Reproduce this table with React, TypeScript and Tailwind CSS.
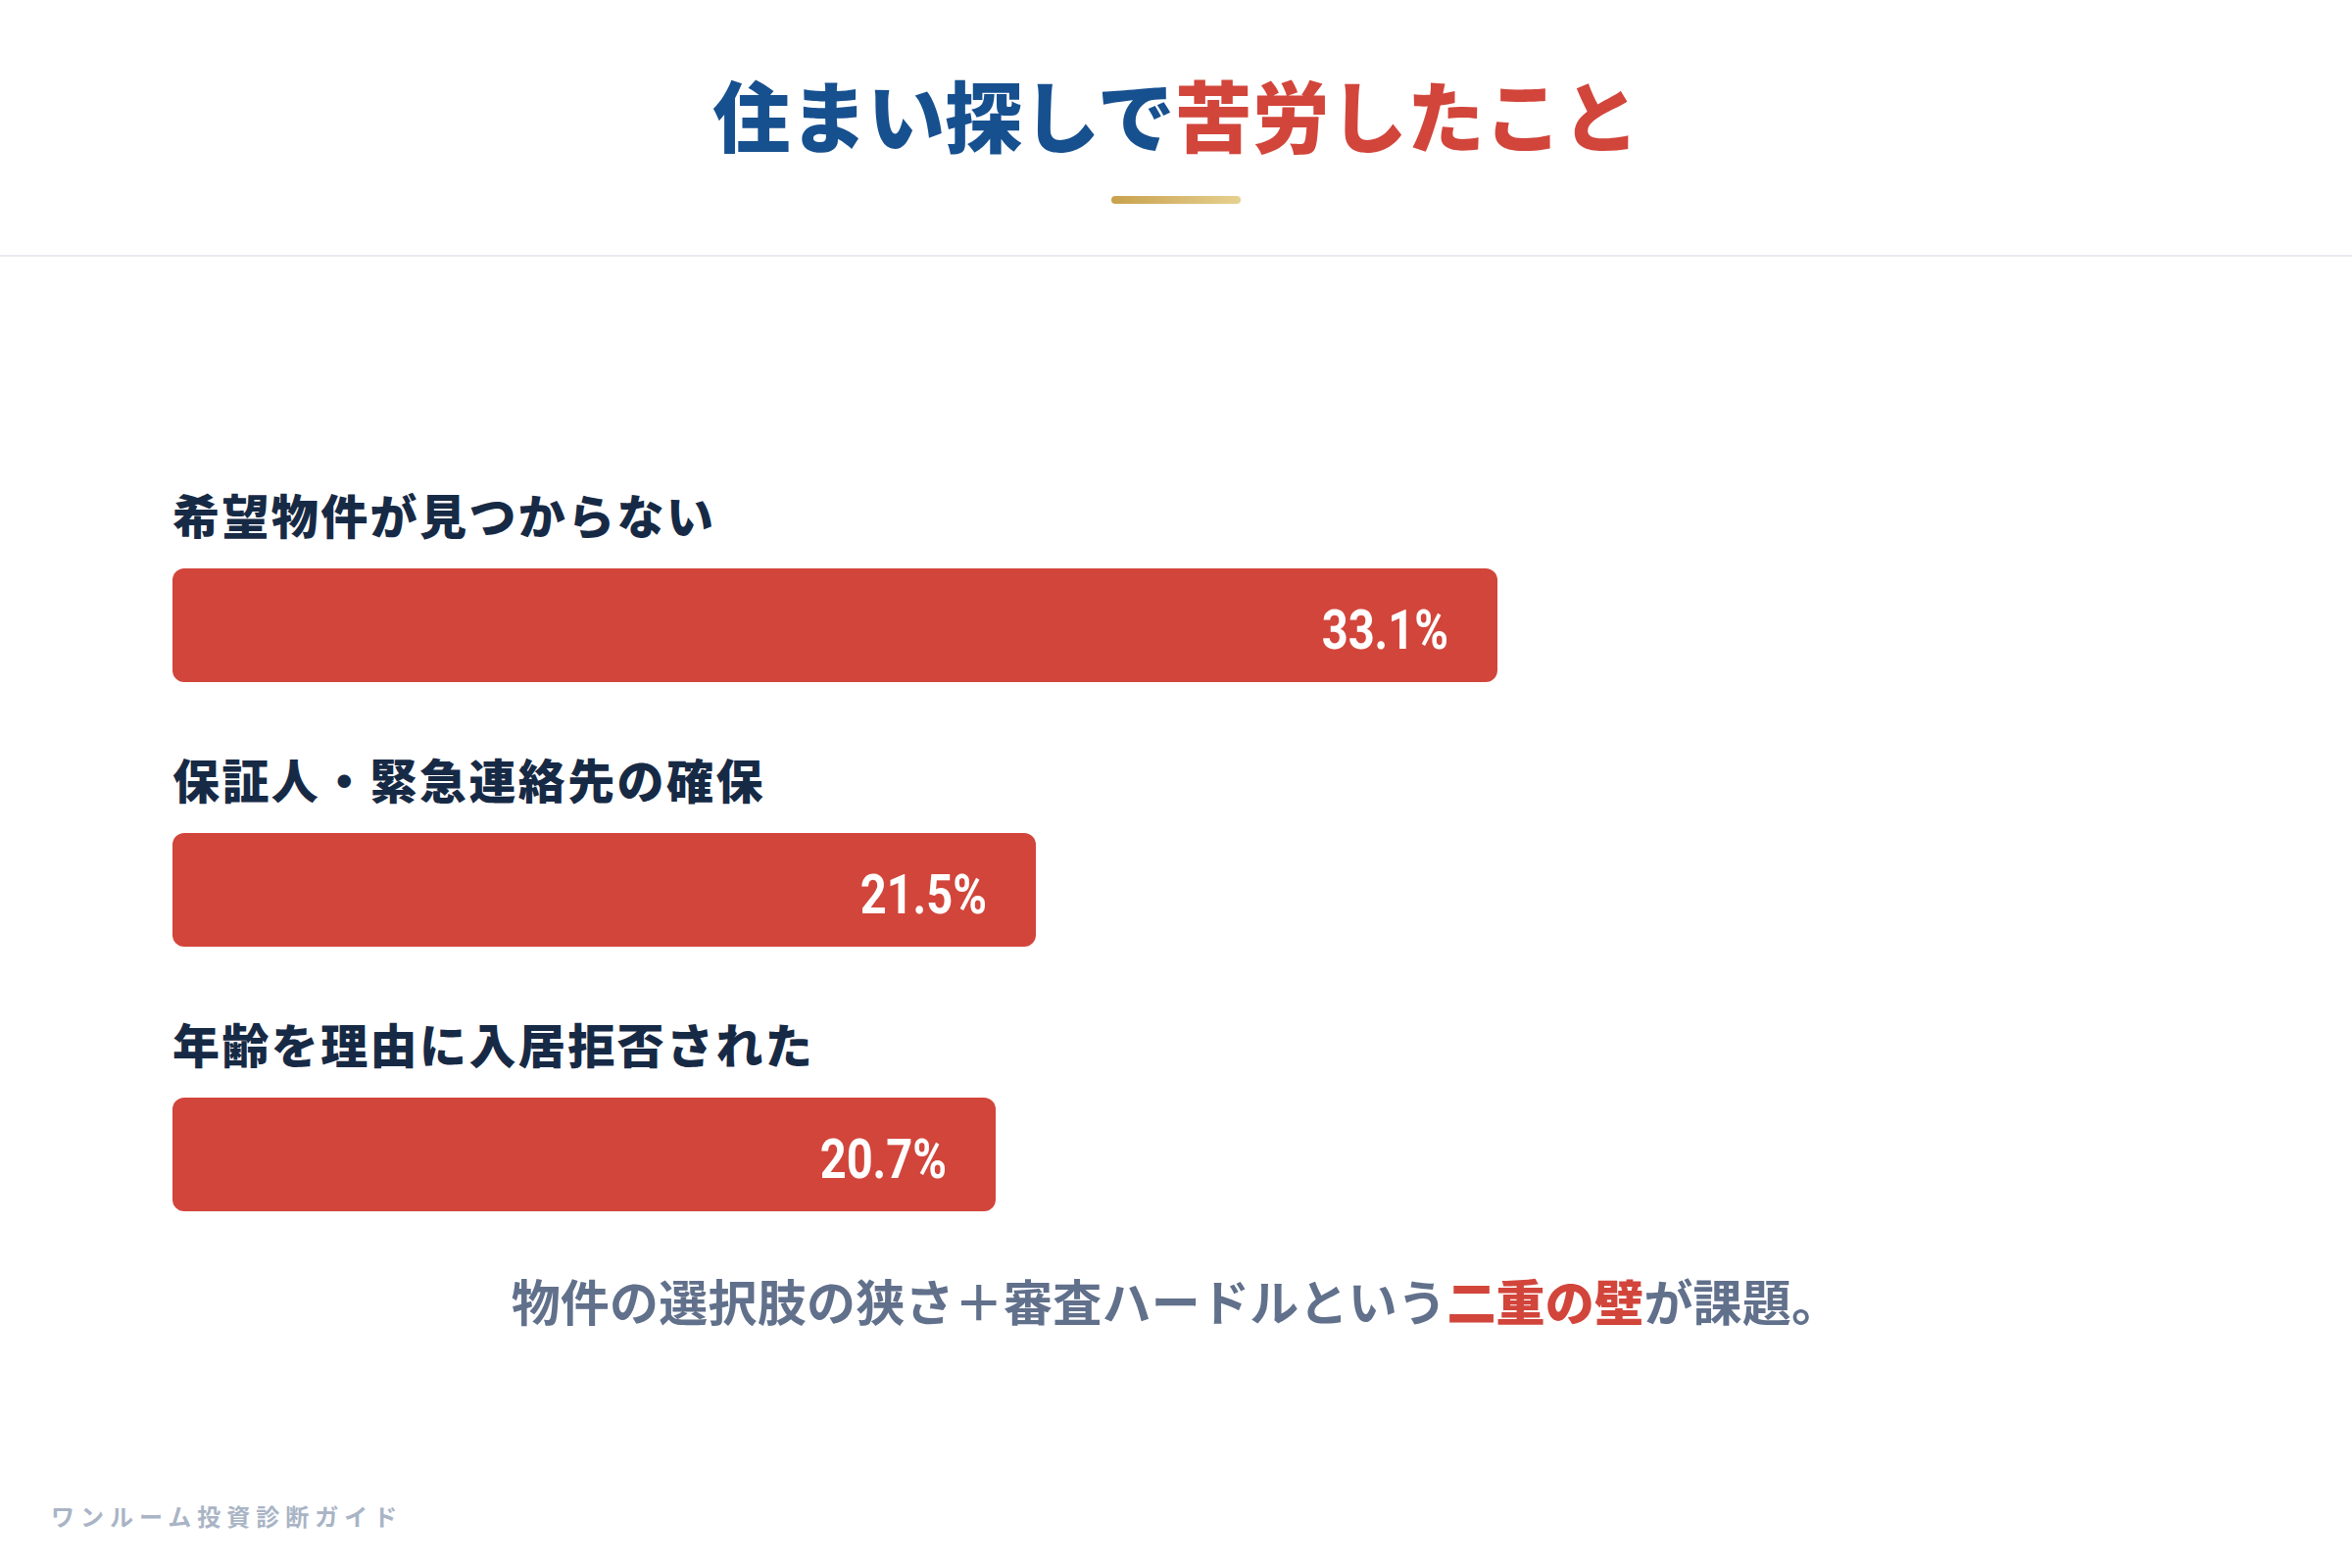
import React from "react";

const bars = [
  { label: "希望物件が見つからない", value: "33.1%", w: "w-[66%]" },
  { label: "保証人・緊急連絡先の確保", value: "21.5%", w: "w-[43%]" },
  { label: "年齢を理由に入居拒否された", value: "20.7%", w: "w-[41%]" },
];

export default function App() {
  return (
    <div className="flex h-[1600px] w-full flex-col bg-white font-['Noto_Sans_CJK_JP','Noto_Sans_CJK_SC',sans-serif]">
      <header className="flex flex-col items-center border-b-2 border-[#e8eaef] pt-[76px] pb-[52px]">
        <h1 className="text-[79px] leading-none font-black">
          <span className="text-[#17508f]">住まい探しで</span>
          <span className="text-[#d2453b]">苦労したこと</span>
        </h1>
        <div className="mt-[45px] h-[8px] w-[132px] rounded-full bg-gradient-to-r from-[#c8a14c] to-[#e6d08f]" />
      </header>

      <main className="flex flex-col px-[176px] pt-[238px]">
        <div className="flex flex-col gap-[74px]">
          {bars.map((b) => (
            <div key={b.label} className="flex flex-col gap-[32px]">
              <div className="text-[48px] leading-none font-black tracking-[0.05em] text-[#172a45]">
                {b.label}
              </div>
              <div
                className={`flex h-[116px] items-center justify-end rounded-[12px] bg-[#d2453b] pt-[10px] pr-[50px] ${b.w}`}
              >
                <span className="inline-block origin-right scale-x-[0.84] font-['Roboto','Liberation_Sans',sans-serif] text-[56px] leading-none font-bold text-white">
                  {b.value}
                </span>
              </div>
            </div>
          ))}
        </div>
        <p className="mt-[65px] text-center text-[50px] leading-none font-bold tracking-[0.005em] text-[#61708b]">
          物件の選択肢の狭さ＋審査ハードルという
          <span className="font-black text-[#d2453b]">二重の壁</span>
          が課題。
        </p>
      </main>

      <footer className="mt-auto pb-[41px] pl-[52px] text-[24px] leading-none font-bold tracking-[0.25em] text-[#a9b4c5]">
        ワンルーム投資診断ガイド
      </footer>
    </div>
  );
}
